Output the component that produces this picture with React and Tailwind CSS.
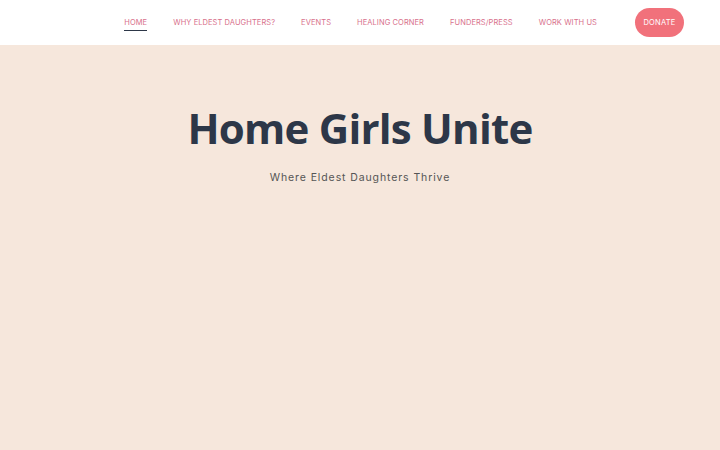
import React from 'react';

const links = ['Home', 'Why Eldest Daughters?', 'Events', 'Healing Corner', 'Funders/Press', 'Work With Us'];

export default function App() {
  return (
    <div className="w-full h-[450px] flex flex-col bg-[#f6e7dc]" style={{ fontFamily: 'Inter, sans-serif' }}>
      {/* Header */}
      <header className="h-[45px] bg-white flex items-center justify-end pr-[36px] shrink-0">
        <nav className="flex items-center gap-[26px]">
          {links.map((l, i) => (
            <a
              key={l}
              href="#"
              className={`relative text-[7.5px] uppercase tracking-[0.01em] text-[#d8708c] leading-none ${
                i === 0 ? 'after:absolute after:left-0 after:right-0 after:-bottom-[5px] after:h-px after:bg-[#2d3748]' : ''
              }`}
            >
              {l}
            </a>
          ))}
        </nav>
        <button className="ml-[38px] w-[49px] h-[29px] rounded-full bg-[#f1717b] text-white text-[7.5px] uppercase tracking-[0.03em]">
          Donate
        </button>
      </header>

      {/* Hero */}
      <main className="flex flex-col items-center pt-[62px]">
        <h1
          className="text-[42px] font-bold leading-none tracking-[-0.018em] text-[#2d3748]"
          style={{ fontFamily: '"Open Sans", sans-serif' }}
        >
          Home Girls Unite
        </h1>
        <p className="mt-[21px] text-[10.5px] leading-[16px] tracking-[0.085em] text-[#555555]">Where Eldest Daughters Thrive</p>
      </main>
    </div>
  );
}
